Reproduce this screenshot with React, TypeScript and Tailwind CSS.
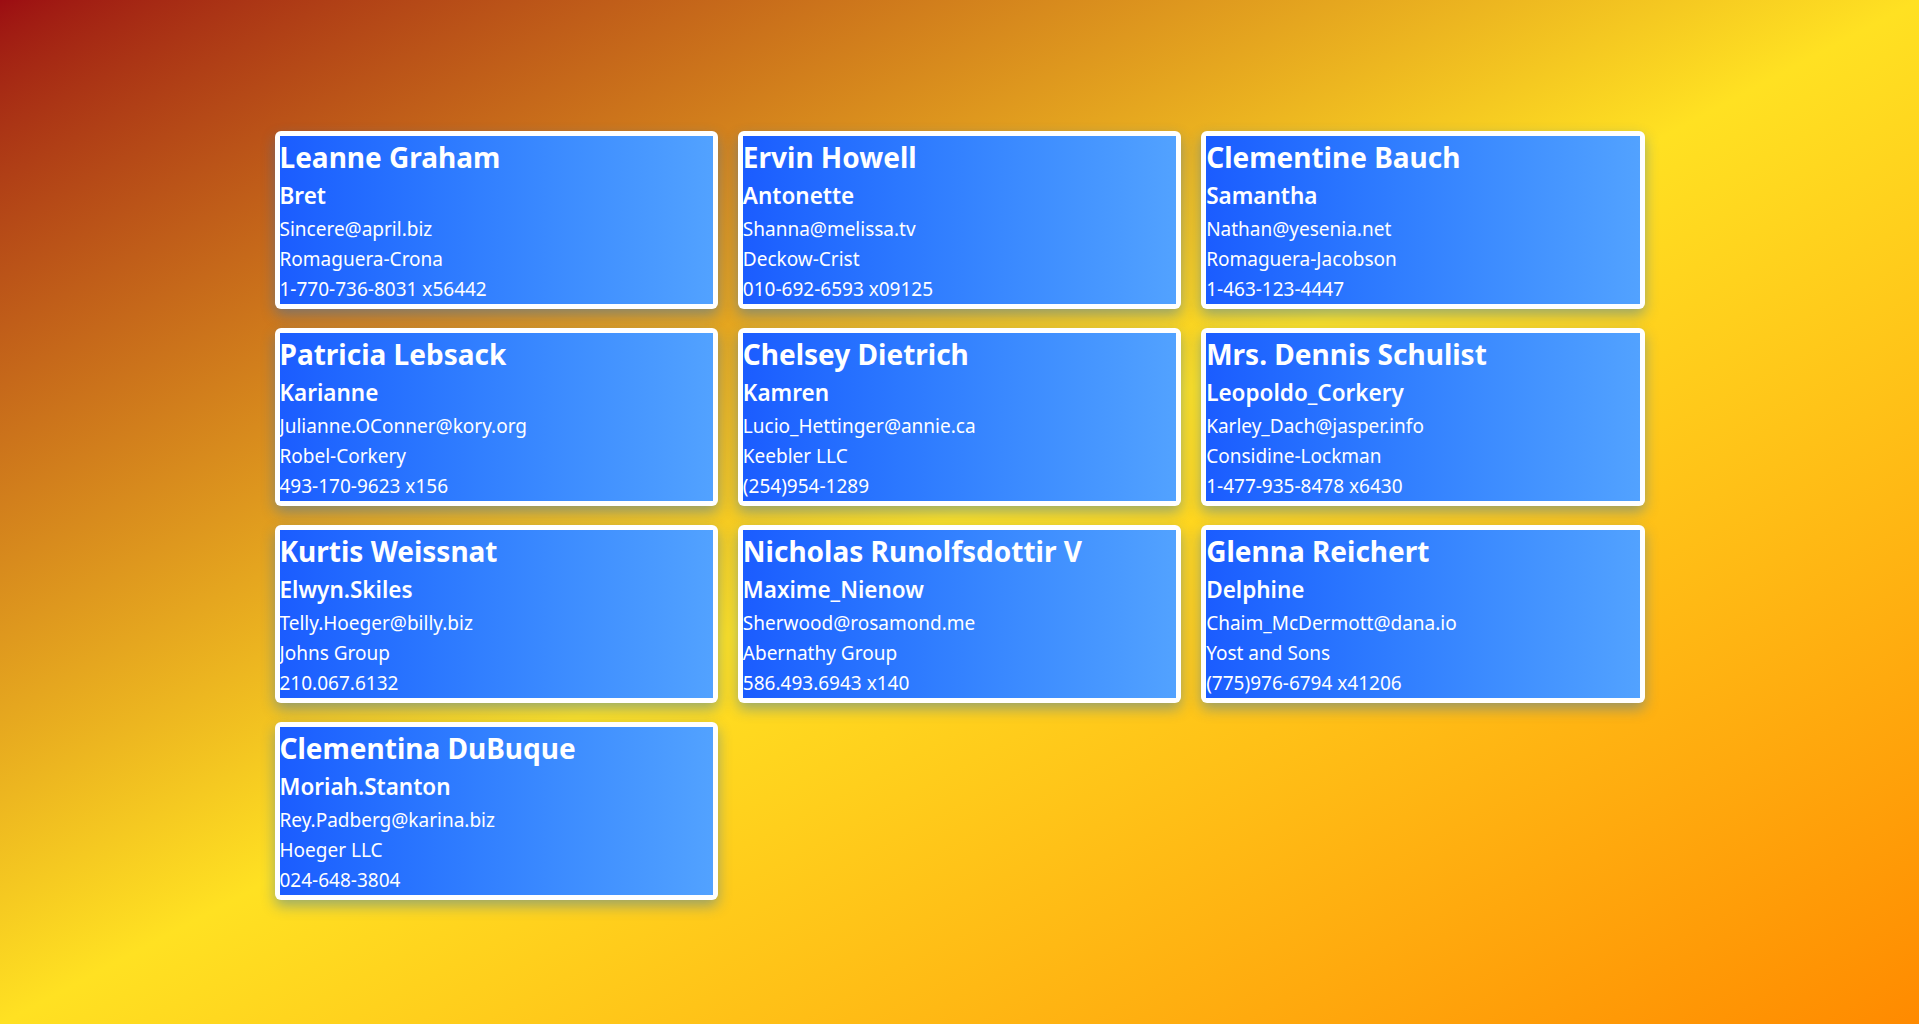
const users = [
	{ name: "Leanne Graham", username: "Bret", email: "Sincere@april.biz", company: "Romaguera-Crona", phone: "1-770-736-8031 x56442" },
	{ name: "Ervin Howell", username: "Antonette", email: "Shanna@melissa.tv", company: "Deckow-Crist", phone: "010-692-6593 x09125" },
	{ name: "Clementine Bauch", username: "Samantha", email: "Nathan@yesenia.net", company: "Romaguera-Jacobson", phone: "1-463-123-4447" },
	{ name: "Patricia Lebsack", username: "Karianne", email: "Julianne.OConner@kory.org", company: "Robel-Corkery", phone: "493-170-9623 x156" },
	{ name: "Chelsey Dietrich", username: "Kamren", email: "Lucio_Hettinger@annie.ca", company: "Keebler LLC", phone: "(254)954-1289" },
	{ name: "Mrs. Dennis Schulist", username: "Leopoldo_Corkery", email: "Karley_Dach@jasper.info", company: "Considine-Lockman", phone: "1-477-935-8478 x6430" },
	{ name: "Kurtis Weissnat", username: "Elwyn.Skiles", email: "Telly.Hoeger@billy.biz", company: "Johns Group", phone: "210.067.6132" },
	{ name: "Nicholas Runolfsdottir V", username: "Maxime_Nienow", email: "Sherwood@rosamond.me", company: "Abernathy Group", phone: "586.493.6943 x140" },
	{ name: "Glenna Reichert", username: "Delphine", email: "Chaim_McDermott@dana.io", company: "Yost and Sons", phone: "(775)976-6794 x41206" },
	{ name: "Clementina DuBuque", username: "Moriah.Stanton", email: "Rey.Padberg@karina.biz", company: "Hoeger LLC", phone: "024-648-3804" },
];

const UserCard = ({ name, username, email, company, phone }: any) => (
	<div className="bg-white p-[5px] rounded-md shadow-[0_6px_14px_rgba(30,110,200,0.45)]">
		<div className="bg-gradient-to-r from-[#1b5cff] to-[#52a2ff] text-white h-[168px]">
			<h2 className="text-[28px] leading-[42px] font-bold">{name}</h2>
			<h3 className="text-[22.5px] leading-[36px] font-semibold">{username}</h3>
			<p className="text-[19px] leading-[30px]">{email}</p>
			<p className="text-[19px] leading-[30px]">{company}</p>
			<p className="text-[19px] leading-[30px]">{phone}</p>
		</div>
	</div>
);

const App = () => {
	return (
		<div className="min-h-screen bg-gradient-to-br from-[#9c0c12] via-[#ffe122] to-[#ff8a00] pt-[131px] font-['Noto_Sans',sans-serif]">
			<div className="w-[1370px] mx-auto grid grid-cols-3 gap-x-5 gap-y-[19px]">
				{users.map((user) => (
					<UserCard key={user.name} {...user} />
				))}
			</div>
		</div>
	);
};

export default App;
